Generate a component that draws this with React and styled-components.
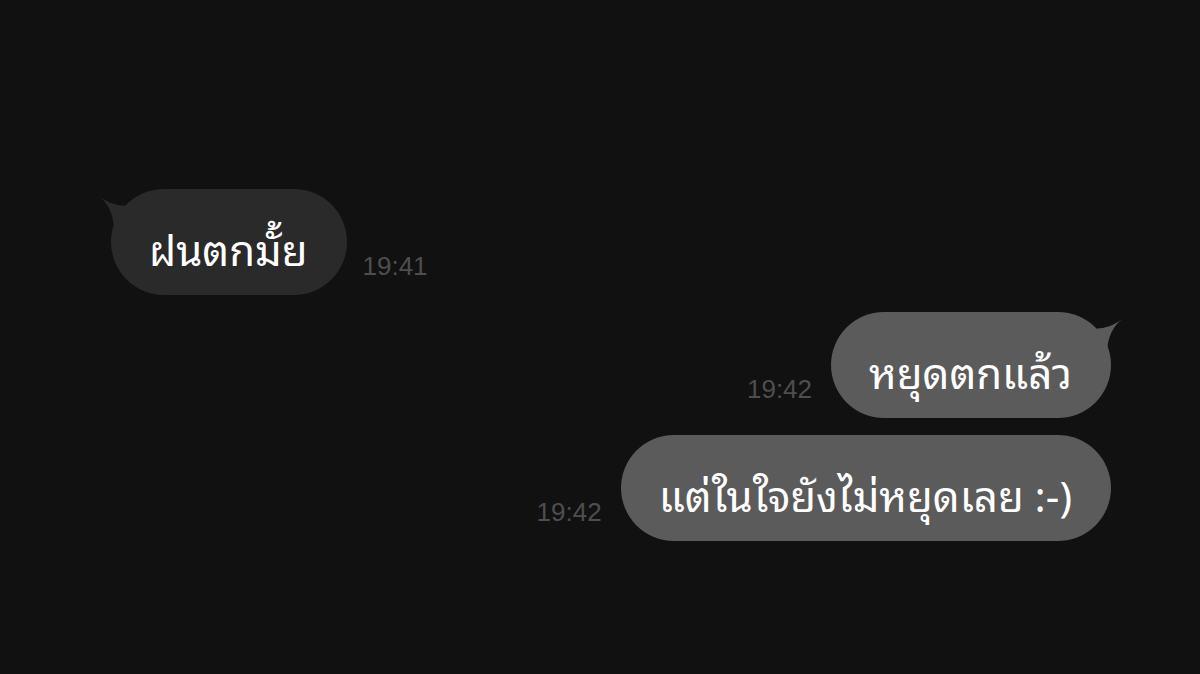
import React from 'react'
import styled, { createGlobalStyle } from 'styled-components'

const Global = createGlobalStyle`
  html, body {
    margin: 0;
    padding: 0;
    background: #111111;
  }
  body {
    width: 1200px;
    height: 674px;
    overflow: hidden;
  }
`

const Chat = styled.div`
  width: 1200px;
  height: 674px;
  box-sizing: border-box;
  padding: 189px 89px 0 111px;
  display: flex;
  flex-direction: column;
  gap: 17px;
  background: #111111;
`

const Row = styled.div`
  display: flex;
  align-items: flex-end;
  gap: ${p => (p.$mine ? '19px' : '16px')};
  justify-content: ${p => (p.$mine ? 'flex-end' : 'flex-start')};
`

const Bubble = styled.div`
  position: relative;
  height: 106px;
  box-sizing: border-box;
  padding: 10px 39px 0 38px;
  border-radius: 53px;
  display: flex;
  align-items: center;
  background: ${p => (p.$mine ? '#5b5b5b' : '#2a2a2a')};
  color: #ffffff;
  font-family: "Noto Sans Thai Looped", "Loma", "Garuda", "Tlwg Typo", "Noto Sans Thai", "Noto Sans", "DejaVu Sans", sans-serif;
  font-size: 42px;
  white-space: nowrap;
`

const Time = styled.span`
  font-family: "Liberation Sans", Arial, sans-serif;
  font-size: 26px;
  color: #4e4e4e;
  line-height: 1;
  margin-bottom: 16px;
  order: ${p => (p.$mine ? -1 : 0)};
`

const TailSvg = styled.svg`
  position: absolute;
  top: 0;
  ${p => (p.$mine ? 'right: -17px; transform: scaleX(-1);' : 'left: -18px;')}
`

const Tail = ({ mine, color }) => (
  <TailSvg $mine={mine} width="42" height="46" viewBox="0 0 42 46">
    <path d="M3 5 Q18 18 38 17 L38 46 L21 42 Q21 17 3 5 Z" fill={color} />
  </TailSvg>
)

const Message = ({ mine, tail, text, time }) => (
  <Row $mine={mine}>
    <Bubble $mine={mine}>
      {tail && <Tail mine={mine} color={mine ? '#5b5b5b' : '#2a2a2a'} />}
      {text}
    </Bubble>
    <Time $mine={mine}>{time}</Time>
  </Row>
)

export default function App() {
  return (
    <>
      <Global />
      <Chat>
        <Message tail text="ฝนตกมั้ย" time="19:41" />
        <Message mine tail text="หยุดตกแล้ว" time="19:42" />
        <Message mine text="แต่ในใจยังไม่หยุดเลย :-)" time="19:42" />
      </Chat>
    </>
  )
}
